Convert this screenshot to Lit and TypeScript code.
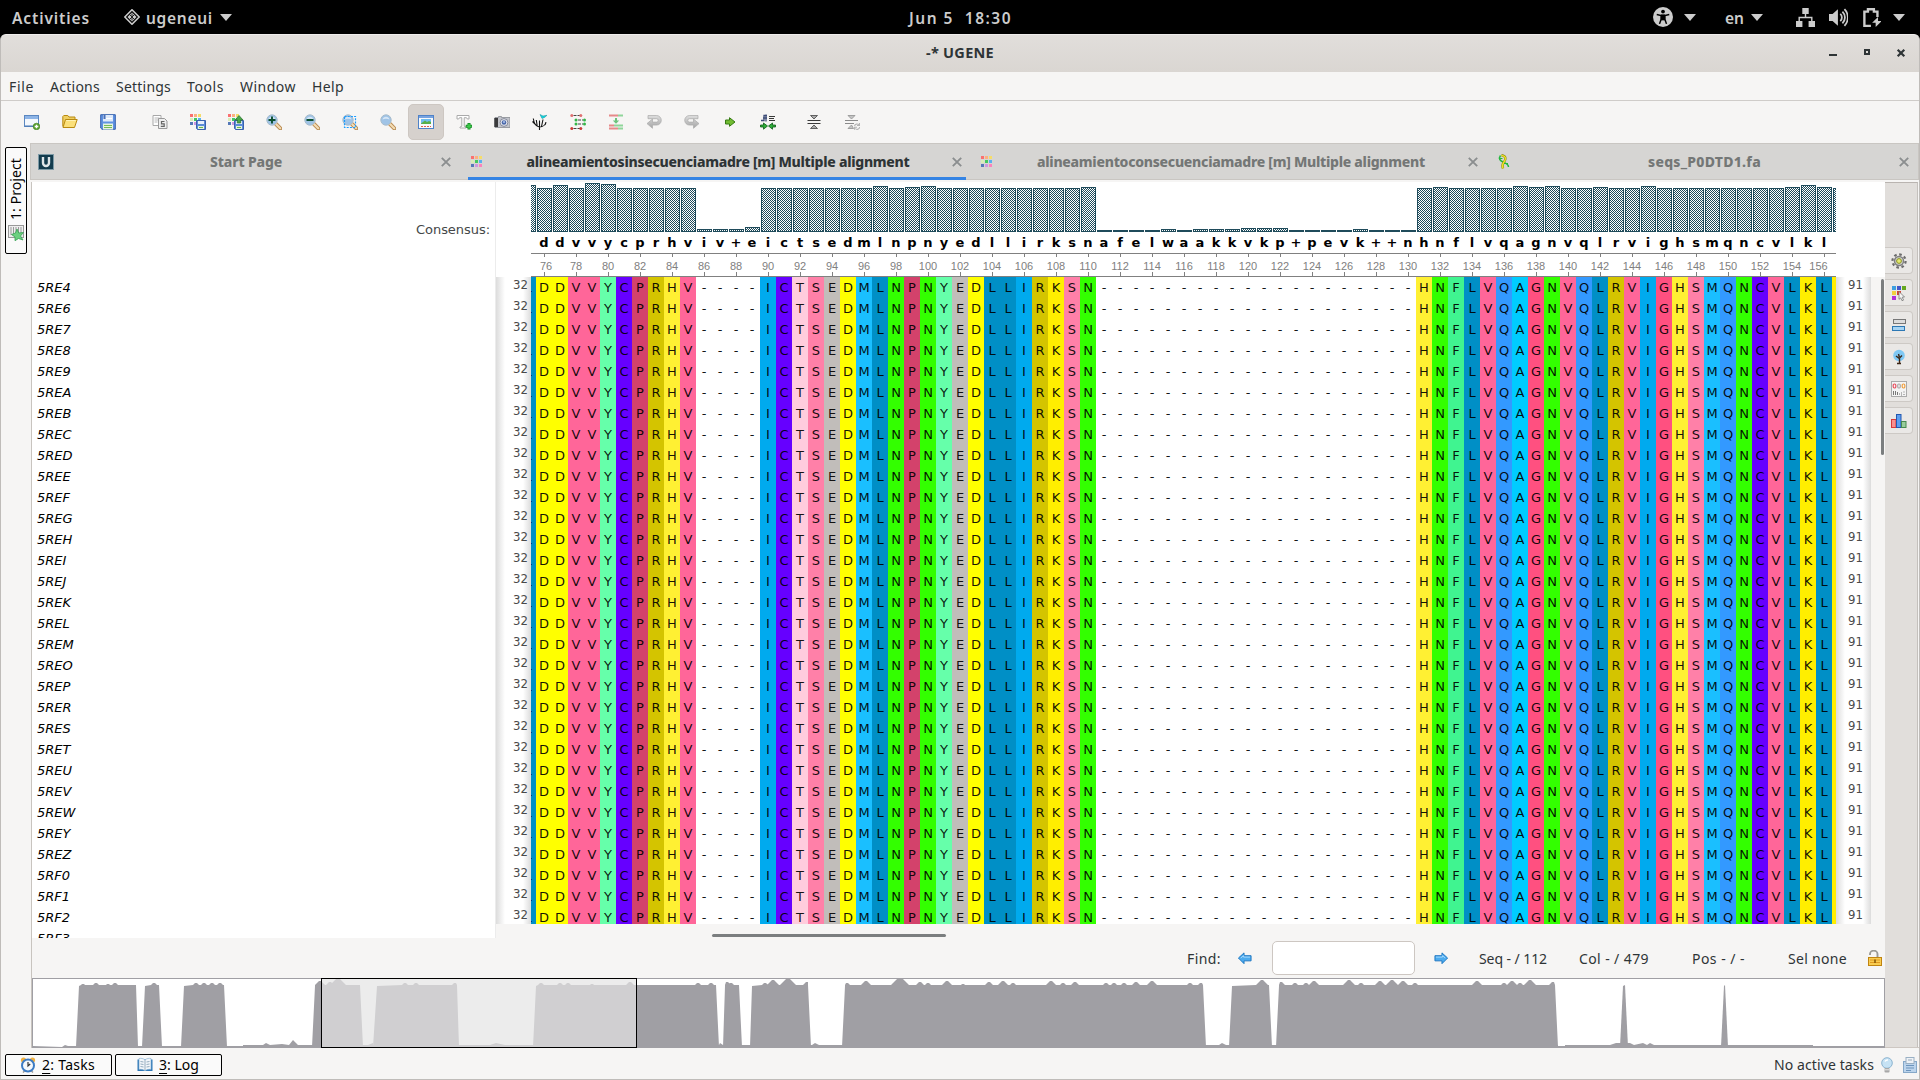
import { LitElement, html, css, svg, unsafeCSS, nothing } from "lit";
import { customElement, property } from "lit/decorators.js";
import { classMap } from "lit/directives/class-map.js";

const COLORS: Record<string, string> = {
  D: "#ffff00", V: "#ff6699", Y: "#66ffaa", C: "#6600ff", P: "#d3426b", R: "#d4c400",
  H: "#fff033", I: "#00aaee", T: "#ffccdd", S: "#ff80a8", E: "#c1bdba", M: "#1abfff",
  L: "#008fc6", N: "#33ff00", K: "#ffee00", F: "#40f490", Q: "#3399ff", A: "#00ccff", G: "#ff5080",
};
const SEQ = "LDDVVYCPRHV----ICTSEDMLNPNYEDLLIRKSN--------------------HNFLVQAGNVQLRVIGHSMQNCVLKLK";
const CONS = " ddvvycprhviv+eictsedmlnpnyedllirksnafelwaakkvkp+pevk++nhnflvqagnvqlrvighsmqncvlkl ";
const BARS = [
  47, 44, 47, 44, 49, 48, 44, 44, 44, 44, 44, 3, 3, 3, 5,
  44, 44, 44, 44, 44, 44, 44, 46, 44, 45, 46, 44, 44, 44, 44, 44, 44, 44, 44, 44, 45,
  2, 2, 2, 2, 3, 2, 3, 3, 3, 4, 4, 4, 2, 2, 2, 2, 3, 2, 2, 2,
  44, 45, 44, 44, 44, 44, 46, 45, 46, 44, 44, 45, 44, 44, 46, 44, 44, 44, 44, 44, 44, 44, 44, 45, 47, 45, 44,
];
const NAMES = ("5RE4 5RE6 5RE7 5RE8 5RE9 5REA 5REB 5REC 5RED 5REE 5REF 5REG 5REH 5REI 5REJ 5REK " +
  "5REL 5REM 5REO 5REP 5RER 5RES 5RET 5REU 5REV 5REW 5REY 5REZ 5RF0 5RF1 5RF2").split(" ");

/* Overview profile: solid blocks given as [footLeft, topLeft, topRight, footRight, bump positions (x:y)...] */
type Block = [number, number, number, number, string];
const BLOCKS: Block[] = [
  [76, 79, 136, 138, "83:984 96:983 108:984 115:983"],
  [142, 145, 159, 162, "154:983"],
  [181, 184, 224, 227, "196:983 204:983 212:983 220:983"],
  [312, 315, 360, 363, "320:981 330:982 338:978"],
  [373, 377, 457, 459, "405:983 416:983 455:983"],
  [533, 536, 716, 719, "541:983 560:983 568:983 592:984 630:982 698:983 711:983"],
  [723, 725, 739, 742, "727:982 731:983"],
  [750, 752, 808, 811, "765:983 773:980 788:978 807:982"],
  [842, 845, 1203, 1206, "847:983 866:981 900:977 920:982 928:983 947:981 963:984 989:982 1003:981 1013:983 1051:981 1063:983 1075:982 1106:983 1114:983 1124:983 1136:982 1152:981 1190:983 1201:983"],
  [1229, 1232, 1269, 1272, "1262:980"],
  [1276, 1279, 1555, 1558, "1281:982 1295:983 1306:983 1314:981 1349:980 1361:983 1380:981 1392:980 1403:981 1415:983 1477:981 1504:983 1512:981 1520:983 1530:980 1553:982"],
  [1620, 1623, 1625, 1628, ""],
  [1721, 1724, 1725, 1728, ""],
];
const LOW = "M62,1047 L65,1045 L68,1046 H243 V1045 H263 L266,1043 L270,1045 L282,1044 L289,1045 L293,1040 L298,1045 H368 L373,1043 V1045 H490 L496,1043 L505,1045 H719 L720,1043 L723,1045 H812 L815,1043 L819,1045 H1219 L1222,1043 L1226,1045 H1558 V1046 H1565 V1045 H1610 L1616,1043 H1630 L1634,1045 L1643,1043 L1647,1045 L1650,1043 L1654,1045 H1813 V1046 H1884 V1048 H33 V1046Z";

function blockPath([a, b, c, d, bumps]: Block): string {
  let p = `M${a},1047 L${b},986`;
  if (bumps) for (const s of bumps.split(" ")) {
    const [x, y] = s.split(":").map(Number);
    const w = 985 - y;
    p += ` L${Math.max(b, x - w - 1)},985 L${x - 1},${y} L${x + 1},${y} L${Math.min(c, x + w + 1)},985`;
  }
  return p + ` L${c},985 L${d},1047Z`;
}

const dots = (x = 1, y = 1, s = 3, g = 1, n = 9) =>
  ["#fa7070", "#fdb080", "#f5dd6a", "#d8ecb8", "#44c860", "#58b0ee", "#5578b8", "#cc98e0", "#fc82bc"]
    .slice(0, n).map((c, i) => svg`<rect x=${x + (i % 3) * (s + g)} y=${y + Math.floor(i / 3) * (s + g)} width=${s} height=${s} fill=${c} />`);
const floppy = svg`<path d="M6.5 6.5h9v9h-8l-1-1z" fill="#5c8cd8" stroke="#3a62ac"/><rect x="8" y="7" width="6" height="3" fill="#e8f0fc"/><rect x="8" y="12" width="6" height="3" fill="#e6f4e0"/><rect x="9" y="13" width="4" height="1" fill="#6cb850"/>`;
const lens = svg`<path d="M10 10l4.3 4.3" stroke="#b98a50" stroke-width="4" stroke-linecap="round"/><path d="M10.2 10.2l4 4" stroke="#f3dcb4" stroke-width="2.2" stroke-linecap="round"/><circle cx="6" cy="6" r="5.2" fill="#9fc3e6" stroke="#a9bccb"/><path d="M2.5 5.5a3.6 3.6 0 0 1 7 0q-3.5-1.5-7 0z" fill="#d5e6f6"/>`;
const undo = (id: string) => svg`<linearGradient id=${id} x1="0" y1="0" x2="0" y2="1"><stop offset="0" stop-color="#dedede"/><stop offset="1" stop-color="#a4a4a4"/></linearGradient><path d="M2 1.5h8.5a4.6 4.6 0 0 1 0 9.6H6.5v3.2L1 9.6 6.500 5v3.100H10.500a1.700 1.700 0 0 0 0-3.400H2z" fill="url(#${id})" stroke="#aaaaaa" stroke-width=".7"/>`;

const ICONS: Record<string, unknown> = {
  newdoc: svg`<rect x=".5" y="1.500" width="14" height="11" fill="#f4f8fd" stroke="#5b87c0"/><rect x="1" y="2" width="13" height="3" fill="#8db4e6"/><path d="M1 12h13" stroke="#4a78b4"/><circle cx="12.500" cy="12.500" r="3.300" fill="#5ea334" stroke="#3e7d1c" stroke-width=".6"/><path d="M12.500 10.700v3.600M10.700 12.500h3.600" stroke="#fff" stroke-width="1.300"/>`,
  open: svg`<path d="M.8 12.500V2.500l1-1h4l1.200 1.500h6v3" fill="#efcf62" stroke="#b98a10"/><path d="M1 13.500L3.500 5.500h11.700L12.500 13.500z" fill="#fbe07a" stroke="#b98a10"/><path d="M4.200 6.500h9.500" stroke="#fff3b4"/>`,
  save: svg`<path d="M.7.700h14.600v14.600H2L.7 14z" fill="#5f92e2" stroke="#3561ad"/><rect x="3" y="1" width="10" height="6.500" fill="#dfeaf9"/><rect x="3.500" y="1" width="2" height="4" fill="#4a70b8"/><path d="M6 4.500h6" stroke="#fff"/><rect x="3" y="9.500" width="10" height="6" fill="#e6f3df"/><path d="M4 11.500h8M4 13.500h8" stroke="#75bb55"/>`,
  copy: svg`<path d="M1 1.500h8v10H1z" fill="#fff" stroke="#a8a8a8"/><path d="M2.500 4h5M2.500 6h5M2.500 8h3" stroke="#b8b8b8"/><path d="M6.500 4.500h6l2.500 2.500v7.500H6.500z" fill="#eee" stroke="#999"/><path d="M12.500 7.500H9.500v2.300h2.700v2.600H8.800" fill="none" stroke="#666" stroke-width="1.200"/>`,
  dotsave: svg`${dots(0, 0, 3, 1)}${floppy}`,
  dotexport: svg`${dots(0, 0, 3, 1)}${floppy}<path d="M11 1.500l4 4.500h-2.300v3H9.300V6H7z" fill="#4aa548" stroke="#25702a" stroke-width=".7"/>`,
  zoomin: svg`${lens}<path d="M6 2.500v7M2.500 6h7" stroke="#0b4f30" stroke-width="1.900"/>`,
  zoomout: svg`${lens}<path d="M2.500 6h7" stroke="#0b4f30" stroke-width="1.900"/>`,
  zoomsel: svg`${lens}<rect x="2.500" y="2.500" width="11" height="11" fill="none" stroke="#1a9cff" stroke-width="1.200" stroke-dasharray="2 1.200"/>`,
  zoom: lens,
  overview: svg`<rect x=".5" y="1.500" width="15" height="13" fill="#f8fafc" stroke="#4f82c8"/><rect x="1" y="2" width="14" height="2" fill="#77a3e0"/><rect x="3" y="5" width="10" height="5" fill="#6fbcf0"/><path d="M3 9.500l4-3 2 1.500 2-1 2 1v2H3z" fill="#58b048"/><path d="M3 12.500h10" stroke="#e06050" stroke-dasharray="2 1"/>`,
  text: svg`<path d="M1 1.500h12v3.500h-1.700l-.8-1.300H8.200v8.600l1.800.7v1H4v-1l1.800-.7V3.700H3.500L2.700 5H1z" fill="#fff" stroke="#aaa"/><path d="M13 9v6.500M9.700 12.200h6.500" stroke="#128a22" stroke-width="3"/><path d="M13 9.700v5M10.500 12.200h5" stroke="#3ecb4a" stroke-width="1.500"/>`,
  camera: svg`<path d="M1 3.500h3.500V2.500h3v1H16v10H1z" fill="#c2c4ca" stroke="#888b92" stroke-width=".8"/><rect x=".3" y="4" width="3.700" height="9" fill="#3a3a3c"/><circle cx="10" cy="8.500" r="3.900" fill="#e4e6ec" stroke="#84889a"/><circle cx="10" cy="8.500" r="2.300" fill="#4b69aa"/><circle cx="10" cy="8" r=".9" fill="#bcd0f6"/>`,
  tree: svg`<path d="M7.500 16v-4.500M7.500 13C4 12.500 2 10 1.300 4.500M7.500 13c3.500 0 6-2.500 6.500-5M5.200 12L4.300 6M7.500 12V6.500M9.500 12.500L11 5.500M3 10L.5 7.500M12.700 11l1.300-1.500" fill="none" stroke="#111" stroke-width="1.100"/><path d="M8 .500l3 1.500 4-.7-2.500 2.200L10 4.500z" fill="#10d8e0" stroke="#158d98" stroke-width=".5"/>`,
  align: svg`<path d="M3.500 1.500h6.500M8 6h5M8 10h5M3.500 14.500h6.500" stroke="#444" stroke-dasharray="3 1"/><g fill="#e07070"><circle cx="1.800" cy="1.500" r="1.500"/><circle cx="10.800" cy="1.500" r="1.500"/></g><g fill="#35b548"><circle cx="6" cy="6" r="1.500"/><circle cx="14.500" cy="6" r="1.500"/><circle cx="6" cy="10" r="1.500"/><circle cx="14.500" cy="10" r="1.500"/></g><g fill="#cf3a38"><circle cx="1.800" cy="14.500" r="1.500"/><circle cx="10.800" cy="14.500" r="1.500"/></g>`,
  addseq: svg`<path d="M1 1.500h9M1 11.500h5M1 14.500h9" stroke="#e68a8a" stroke-width="2"/><path d="M10 1.500h5M6 11.500h9M10 14.500h5" stroke="#8fd69a" stroke-width="2"/><path d="M8 4v3" stroke="#6cc47c" stroke-width="2"/><path d="M4.800 6.500h6.400L8 9.800z" fill="#6cc47c"/>`,
  undo: undo("gu"),
  redo: svg`<g transform="matrix(-1 0 0 1 16 0)">${undo("gr")}</g>`,
  next: svg`<path d="M3.500 6h4V3.700L13 8l-5.500 4.300V10h-4z" fill="#72bb32" stroke="#357b12"/>`,
  realign: svg`<path d="M9 2.500h6M9 4.500h5M9 6.500h6" stroke="#222" stroke-width=".9"/><path d="M1 6.500h3v-5h3M3 4h4M6 .500v7" stroke="#3d4c78" fill="none" stroke-width="1.300"/><path d="M.5 11h3V9l4 3-4 3.200V13h-3zM15.500 11h-3V9l-4 3 4 3.200V13h3z" fill="#2fad3a" stroke="#0e5a18" stroke-width=".8"/>`,
  collapse: svg`<path d="M1.500 6.500h13M1.500 9.500h13" stroke="#3a3a3a"/><path d="M4.500 1.500h7L8 5zM4.500 14.500h7L8 11z" fill="#aaa" stroke="#555" stroke-width=".9"/>`,
  collapse2: svg`<path d="M1 6.500h13M1 9.500h9" stroke="#8a8a8a"/><path d="M4 1.500h7L7.500 5zM4 14.500h5.500L7.500 11z" fill="#c4c4c4" stroke="#999" stroke-width=".9"/><path d="M10.500 12a2.600 2.600 0 0 1 4.500-1M15.700 13a2.600 2.600 0 0 1-4.500 1.500M15.500 9v2.500H13M10.500 15.800v-2.500H13" fill="none" stroke="#b4b4b4" stroke-width="1.100"/>`,
  ugene: svg`<rect x=".5" y=".5" width="15" height="15" fill="#133c4e" stroke="#7d9aa6"/><path d="M5 3v6a3 3 0 0 0 6 0V3" fill="none" stroke="#dfe6e9" stroke-width="2.400"/>`,
  dots: dots(0, 2, 3, 1),
  dna: svg`<path d="M3.500 1.500C1 5 3.500 7 6 8s5.500 2 5.500 5" fill="none" stroke="#22b83c" stroke-width="1.500"/><path d="M4.500 1.300c5 .7 4.500 4 2.500 6.700-2 2.500-2 4-1 6.500" fill="none" stroke="#8a8a10" stroke-width="2.400"/><path d="M4.500 1.300c5 .7 4.500 4 2.500 6.700-2 2.500-2 4-1 6.500" fill="none" stroke="#f2e424" stroke-width="1.300"/><path d="M2.500 4.500h3M7 9.500h4" stroke="#22b83c"/>`,
  gear: svg`<circle cx="8" cy="8" r="6.600" fill="none" stroke="#6c6c6c" stroke-width="2.200" stroke-dasharray="2.600 2.580"/><circle cx="8" cy="8" r="4.500" fill="#d4d4d2" stroke="#808080" stroke-width="1.500"/><circle cx="8" cy="8" r="2.400" fill="#e4ea70" stroke="#8c9420"/>`,
  hilite: svg`<rect x="1" y="1" width="4" height="4" fill="#3ea0e0"/><rect x="6" y="1" width="4" height="4" fill="#4458c8"/><rect x="11" y="1" width="4" height="4" fill="#66a820"/><rect x="1" y="6" width="4" height="4" fill="#f0d040"/><rect x="6" y="6" width="4" height="4" fill="#d84030"/><rect x="1" y="11" width="4" height="4" fill="#b030d8"/><path d="M8 6.500l5.500 5.500-2.300.2 1.300 2.900-1.500.600-1.300-2.800L8 14.300z" fill="#f4f4f4" stroke="#777" stroke-width=".8"/>`,
  pair: svg`<rect x="2.500" y="2.500" width="12" height="4" fill="#ddd" stroke="#777"/><rect x="1.500" y="9.500" width="12" height="4" fill="#a6d4f4" stroke="#2d78b4"/>`,
  treeopt: svg`<circle cx="8" cy="6.500" r="5.800" fill="#7fc8f4"/><path d="M8.500 14.500V8.500M8.300 9.500L5 7M8.500 9l2.500-2.500M8.300 8L7.500 5M6 14.500h4" stroke="#3c2414" stroke-width="1.400" fill="none"/>`,
  stats: svg`<rect x=".5" y=".5" width="15" height="15" fill="#f4f4f4" stroke="#aaa"/><g fill="none" stroke-width="1.200"><rect x="2.200" y="3" width="2.600" height="4" rx="1.200" stroke="#e85060"/><rect x="6.700" y="3" width="2.600" height="4" rx="1.200" stroke="#aaa"/><rect x="11.200" y="3" width="2.600" height="4" rx="1.200" stroke="#f0a040"/></g><path d="M2.500 10v4M4.500 10v4M6.500 11v3M8 13h1M10 12h1M10 14h1M12.500 11h1M12.500 13.500h1" stroke="#777"/>`,
  chart: svg`<rect x=".5" y="6.500" width="4.500" height="8" fill="#f89090" stroke="#d83a3a"/><rect x="5.500" y="1.500" width="4.500" height="13" fill="#5c9ef0" stroke="#2458b0"/><rect x="10.500" y="8.500" width="4.500" height="6" fill="#98cc9c" stroke="#488850"/>`,
  project: svg`<rect x=".5" y=".5" width="15" height="12" fill="#eee" stroke="#999"/><path d="M3 2v8M5.500 2v8M8 2v8M10.500 2v8M13 2v8" stroke="#999"/><path d="M9 4l1.800 4 4.700-.5-3 3.500 2.500 4-4.500-1.500L7 15.700V12L3.500 9.500 7.500 8z" fill="#6cd080" stroke="#35a050" stroke-width=".8"/>`,
  clock: svg`<circle cx="3.500" cy="3" r="2.600" fill="#f0b040"/><circle cx="12.500" cy="3" r="2.600" fill="#f0b040"/><path d="M3 15.500l2-2M13 15.500l-2-2" stroke="#999" stroke-width="1.500"/><circle cx="8" cy="8.500" r="6" fill="#f4f8fc" stroke="#3d7cc4" stroke-width="2"/><path d="M8 5v4l2.200-2" stroke="#333" fill="none" stroke-width="1.200"/>`,
  book: svg`<path d="M.5 2.500h15v11.500H.5z" fill="#2e78b8"/><path d="M2 1.500c2-.5 4 0 6 1.200 2-1.200 4-1.700 6-1.200v11c-2-.5-4 0-6 1.200-2-1.200-4-1.700-6-1.200z" fill="#f2f6fa" stroke="#7aa8cc" stroke-width=".6"/><path d="M8 3v10M3.500 4.500l3 .500M3.500 7l3 .500M3.500 9.500l3 .500M12.500 4.500l-3 .500M12.500 7l-3 .500M12.500 9.500l-3 .500" stroke="#8aa4b8" stroke-width=".9"/>`,
  left: svg`<path d="M1.500 7.500L7.500 2v3H15v5.500H7.500v3z" fill="#4cabee" stroke="#1b74c0"/><path d="M4 7.500l3-2.500v1.500h7" stroke="#a9dafc" fill="none"/>`,
  right: svg`<path d="M14.500 7.500L8.500 2v3H1v5.500h7.500v3z" fill="#4cabee" stroke="#1b74c0"/><path d="M2 6.500h7V5l3 2.500" stroke="#a9dafc" fill="none"/>`,
  lock: svg`<path d="M3 5V4a3.600 3.200 0 0 1 7.500 0v4" fill="none" stroke="#9a9a96" stroke-width="1.900"/><rect x="1.500" y="7.500" width="13" height="8" fill="#f8cc50" stroke="#c08410"/><path d="M3 10h10M3 12.500h10" stroke="#e09820"/><path d="M8 9.500v3.500" stroke="#8a5c08" stroke-width="1.600"/>`,
  bulb: svg`<circle cx="8" cy="6" r="5.300" fill="#c6e2f4" stroke="#8cb4d0"/><path d="M6 4.500a3 3 0 0 1 3-1.500" stroke="#fff" stroke-width="1.500" fill="none"/><rect x="5.500" y="11" width="5" height="4.500" rx="1" fill="#a8a8a8"/><path d="M5.500 12.800h5" stroke="#e8e8e8"/>`,
  note: svg`<rect x="1.500" y="4.500" width="13" height="11" fill="#bcd4ec" stroke="#86a8c8"/><rect x="4" y=".5" width="8" height="6" fill="#eef2f6" stroke="#9ab0c4"/><path d="M4 8.500h8M4 11h8M4 13.500h5" stroke="#6c94bc"/><path d="M6 3h4" stroke="#9ab" />`,
  diamond: svg`<path d="M8 .8L15.200 8 8 15.200.8 8z" fill="none" stroke="#ccc" stroke-width="1.600"/><path d="M8 3.500L12.500 8 8 12.500 3.500 8z" fill="#ccc"/><path d="M6 6l4 4M10 6l-4 4M8 4.500v7" stroke="#222" stroke-width="1"/>`,
  access: svg`<circle cx="8" cy="8" r="8" fill="#ccc"/><circle cx="8" cy="3.600" r="1.500" fill="#000"/><path d="M3 6l3.500.8v3L5.200 13.500M13 6l-3.500.8v3l1.300 3.700M6.500 6.800h3v3.200h-3z" stroke="#000" stroke-width="1.200" fill="none"/><rect x="6.300" y="6" width="3.400" height="4.500" fill="#000"/>`,
  network: svg`<path d="M5.300 0h5.400v5H5.300zM0 11h5.400v5H0zM10.600 11H16v5h-5.400z" fill="#ccc"/><path d="M8 5v3M2.700 11V8h10.600v3" fill="none" stroke="#ccc" stroke-width="1.200"/>`,
  volume: svg`<path d="M0 5h3l4.500-4v14L3 11H0z" fill="#ccc"/><path d="M9.500 5a4 4 0 0 1 0 6M11.300 3a7 7 0 0 1 0 10M13 1a10 10 0 0 1 0 14" stroke="#ccc" fill="none" stroke-width="1.500"/>`,
  battery: svg`<path d="M7.500 15.200H2V3h3V1h5v2h3v4.500" fill="none" stroke="#ccc" stroke-width="2"/><path d="M13.500 7.500L8.500 12.500h3v3.500l5-5h-3z" fill="#ccc"/>`,
  close: svg`<path d="M3.800 3.800l8.400 8.400M12.200 3.800l-8.400 8.400" stroke="#8b8e8f" stroke-width="1.900"/>`,
  min: svg`<path d="M4 11h8" stroke="#2e3436" stroke-width="2"/>`,
  max: svg`<rect x="6" y="6" width="4" height="4" fill="none" stroke="#2e3436" stroke-width="2"/>`,
  quit: svg`<path d="M4.700 5.700l6.600 6.600M11.300 5.700l-6.600 6.600" stroke="#2e3436" stroke-width="2.200"/>`,
};

@customElement("ui-icon")
export class UiIcon extends LitElement {
  @property() name = "";
  @property({ type: Number }) size = 16;
  static styles = css`:host { display: block; flex: none; line-height: 0 } svg { display: block }`;
  render() {
    return html`<svg width=${this.size} height=${this.size} viewBox="0 0 16 16">${ICONS[this.name] ?? nothing}</svg>`;
  }
}

/* A one-line label whose tracking is tuned so that it occupies a given width. */
@customElement("ui-label")
export class UiLabel extends LitElement {
  @property() text = "";
  @property({ type: Number }) w = 0;
  @property({ type: Boolean }) mnemonic = false;
  static styles = css`
    :host { display: block; flex: none; white-space: pre }
    span { display: inline-block }
    u { text-underline-offset: 3px; text-decoration-thickness: 1px }
  `;
  firstUpdated() {
    const el = this.renderRoot.querySelector("span") as HTMLElement;
    const natural = el.getBoundingClientRect();
    const own = Math.max(natural.width, natural.height);
    el.style.letterSpacing = `${(this.w - own) / this.text.length}px`;
  }
  render() {
    return html`<span>${this.mnemonic ? html`<u>${this.text[0]}</u>${this.text.slice(1)}` : this.text}</span>`;
  }
}

const residueCss = unsafeCSS(Object.entries(COLORS).map(([k, v]) => `.r${k}{background:${v}}`).join(""));

@customElement("msa-view")
export class MsaView extends LitElement {
  static styles = [css`
    :host { display: grid; grid-template-columns: 464px 1fr; width: 1853px; height: 796px; background: #f6f5f4; overflow: hidden;
      font: 13px/21px "DejaVu Sans", sans-serif; color: #000 }
    .names { background: #fff; height: 756px; overflow: hidden; border-right: 1px solid #ececec }
    .cons-title { height: 95px; display: flex; align-items: flex-end; justify-content: flex-end; box-sizing: border-box;
      padding: 0 5px 36px 0; color: #444748; line-height: 22px }
    .name { height: 21px; padding-left: 5px; font-style: oblique; line-height: 22px }
    .main { display: flex; flex-direction: column; width: 1389px }
    .top { height: 95px; background: #fff; padding: 0 49px 0 35px; overflow: hidden }
    .track { width: 1305px; overflow: hidden }
    .bars { display: flex; align-items: flex-end; height: 50px; margin-left: -11px; width: 1400px }
    .bar { box-sizing: border-box; width: 15px; margin-left: 1px; flex: none; border: 1px solid #1f4b5b;
      background: repeating-conic-gradient(#1f4b5b 0 25%, #fff 0 50%) 0 0 / 2px 2px }
    .cons { display: flex; font-weight: bold; margin-left: -11px; width: 1400px; height: 21px; line-height: 22px }
    .c { width: 16px; flex: none; text-align: center }
    .ruler { display: flex; width: 1305px; height: 24px; box-sizing: border-box; border: solid #808080; border-width: 1px 0; overflow: hidden;
      font: 11px/25px "Liberation Sans", sans-serif; color: #808080 }
    .tick { flex: none; width: 32px; text-align: center; box-sizing: border-box;
      background: linear-gradient(#808080, #808080) 16px 0 / 1px 3px no-repeat, linear-gradient(#808080, #808080) 16px 100% / 1px 4px no-repeat }
    .tick:first-child { margin-left: -3px; padding-left: 4px }
    .tick.last { padding-right: 11px }
    .body { display: flex; height: 647px; overflow: hidden }
    .nums { width: 35px; box-sizing: border-box; color: #4a4a4a; font: 13px/21px "DejaVu Sans Condensed", "DejaVu Sans", sans-serif; font-stretch: condensed; flex: none;
      background: linear-gradient(90deg, #dcdcdc, #fff 9px, #fff 27px, #dcdcdc); text-align: right; padding-right: 3px }
    .nums.r { text-align: left; padding: 0 0 0 12px }
    .num { height: 21px; line-height: 15px }
    .grid { width: 1305px; overflow: hidden; flex: none; background: #fff; color: rgba(0, 0, 0, .92) }
    .row { display: flex; margin-left: -11px; width: 1400px; height: 21px; line-height: 22px }
    .vbar { width: 13px; display: flex; justify-content: flex-end }
    .vthumb { width: 3px; height: 176px; margin: 2px 0 0 0; border-radius: 2px; background: #7b7e7f }
    .hbar { height: 14px; display: flex; padding: 10px 0 0 216px; box-sizing: border-box }
    .hthumb { width: 234px; height: 3px; border-radius: 2px; background: #7b7e7f }
    .find { grid-column: 1 / 3; display: flex; align-items: center; height: 40px; color: #2e3436;
      font: 14px/20px "Noto Sans", sans-serif; padding-left: 1155px }
    .find ui-label { padding-top: 1px }
    .input { box-sizing: border-box; width: 143px; height: 34px; margin: 0 19px 0 20px; border: 1px solid #cdc7c2; border-radius: 5px; background: #fff }
    .a1 { margin-left: 16px } .a2 { margin-right: 30px }
    .g1 { margin-left: 32px } .g2 { margin-left: 43px } .g3 { margin-left: 43px } .g4 { margin-left: 20px }
  `, residueCss];
  render() {
    return html`
      <div class="names">
        <div class="cons-title"><ui-label text="Consensus:" w="74"></ui-label></div>
        ${[...NAMES, "5RF3"].map((n) => html`<div class="name">${n}</div>`)}
      </div>
      <div class="main">
        <div class="top"><div class="track">
          <div class="bars">${BARS.map((h) => html`<div class="bar" style="height:${h}px"></div>`)}</div>
          <div class="cons">${[...CONS].map((c) => html`<div class="c">${c}</div>`)}</div>
          <div class="ruler">${Array.from({ length: 41 }, (_, i) => 76 + i * 2).map((n) =>
            html`<div class=${classMap({ tick: true, last: n === 156 })}>${n}</div>`)}</div>
        </div></div>
        <div class="body">
          <div class="nums">${NAMES.map(() => html`<div class="num">32</div>`)}</div>
          <div class="grid">${NAMES.map(() => html`<div class="row">${[...SEQ].map((c) =>
            html`<div class=${c === "-" ? "c" : "c r" + c}>${c}</div>`)}</div>`)}</div>
          <div class="nums r">${NAMES.map(() => html`<div class="num">91</div>`)}</div>
          <div class="vbar"><div class="vthumb"></div></div>
        </div>
        <div class="hbar"><div class="hthumb"></div></div>
      </div>
      <div class="find">
        <ui-label text="Find:" w="34"></ui-label><ui-icon class="a1" name="left" size="15"></ui-icon>
        <div class="input"></div>
        <ui-icon class="a2" name="right" size="15"></ui-icon>
        <ui-label text="Seq - / 112" w="68"></ui-label>
        <ui-label class="g1" text="Col - / 479" w="70"></ui-label>
        <ui-label class="g2" text="Pos - / -" w="53"></ui-label>
        <ui-label class="g3" text="Sel none" w="59"></ui-label>
        <ui-icon class="g4" name="lock"></ui-icon>
      </div>`;
  }
}

const TOOLS = ["newdoc", "open", "save", "", "copy", "dotsave", "dotexport", "zoomin", "zoomout", "zoomsel", "zoom",
  "*overview", "text", "camera", "tree", "align", "addseq", "undo", "redo", "next", "realign", "-", "collapse", "collapse2"];
const MENUS: [string, number][] = [["File", 25], ["Actions", 50], ["Settings", 55], ["Tools", 37], ["Window", 56], ["Help", 32]];

@customElement("app-root")
export class AppRoot extends LitElement {
  static styles = css`
    :host { display: flex; flex-direction: column; width: 1920px; height: 1080px; overflow: hidden; background: #000;
      font: 14px/20px "Noto Sans", sans-serif; color: #2e3436 }
    .shell { display: grid; grid-template-columns: 1fr auto 1fr; align-items: center; height: 34px; color: #ccc; flex: none;
      font-size: 15.500px; font-weight: 600; padding: 0 15px 0 12px }
    .left, .right { display: flex; align-items: center }
    .right { justify-content: flex-end }
    .tri { width: 0; height: 0; border: 6px solid transparent; border-top: 7px solid #ccc; border-bottom: 0; margin-top: 1px }
    .appicon { margin: 0 6px 0 34px } .m7 { margin-left: 7px }
    .clock { margin-left: 4px; padding-top: 1px }
    .left ui-label, .right ui-label { padding-top: 1px }
    .acc { margin-right: 11px } .en { margin-left: 29px } .net { margin-left: 33px } .vol { margin: 0 14px } .bat { margin-right: 12px }
    .window { flex: 1; display: flex; flex-direction: column; border-radius: 6px 6px 0 0; background: #f6f5f4; border: 1px solid #bfbcb9; border-top-color: #efedec;
      box-sizing: border-box; overflow: hidden; min-height: 0 }
    .title { display: flex; height: 37px; flex: none; align-items: center; background: linear-gradient(#e1dedb, #dad6d2); font-weight: bold; font-size: 14.500px; box-sizing: border-box; padding-bottom: 3px }
    .title .name { margin-left: 925px; margin-right: 831px }
    .title ui-icon + ui-icon { margin-left: 18px }
    .menu { height: 26px; display: flex; align-items: center; border-bottom: 1px solid #cfccc9; flex: none; padding: 2px 0 0 8px }
    .menu ui-label { margin-right: 16px }
    .tools { height: 42px; display: flex; align-items: center; padding-left: 12px; flex: none }
    .tool { width: 38px; height: 36px; display: flex; align-items: center; justify-content: center }
    .tool.on { width: 36px; margin: 0 1px; box-sizing: border-box; background: #d6d1cd; border: 1px solid #cdc7c2; border-radius: 5px }
    .sep { width: 14px } .sep.s { width: 8px }
    .work { display: flex; flex: none; height: 905px }
    .rail { width: 29px; flex: none; box-sizing: border-box; padding: 4px 0 0 4px }
    .project { box-sizing: border-box; width: 22px; height: 107px; border: 1px solid #000; border-radius: 2px; background: #fafafa; display: flex; flex-direction: column;
      align-items: center; justify-content: space-between; padding: 10px 1px 12px 0; color: #000 }
    .project ui-label { writing-mode: vertical-rl; transform: rotate(180deg); line-height: 20px; font-size: 14px }
    .col { flex: 1; display: flex; flex-direction: column; min-width: 0 }
    .tabs { height: 37px; box-sizing: border-box; display: grid; grid-template-columns: 437px 498px 516px 1fr; background: #d6d5d3; border: 1px solid #c9c6c2; flex: none; margin-bottom: 2px }
    .tab { display: flex; align-items: center; justify-content: space-between; font-weight: 800; color: #747776; padding: 0 14px 1px 7px; margin-bottom: -1px }
    .tab.t2 { padding: 2px 1px 0 3px; color: #2e3436; border-bottom: 3px solid #3584e4 }
    .tab.t3 { padding: 0 1px 1px 15px }
    .tab.t4 { padding: 0 6px 1px 15px }
    .split { display: flex; height: 866px; box-sizing: border-box; border-left: 1px solid #c8c4bf; margin-left: 1px; border-bottom: 1px solid #cdc7c2 }
    .doc { width: 1853px }
    .ov { display: block }
    .opts { width: 32px; background: #e1dedb; border-top: 1px solid #b9b4b0; border-right: 1px solid #c4c0bc; padding-top: 64px; height: 800px }
    .opt { width: 28px; height: 27px; box-sizing: border-box; border: 1px solid #cdc9c5; border-left: 0; border-radius: 0 4px 4px 0; background: #eae8e6; margin-bottom: 5px; display: flex; align-items: center; justify-content: center }
    .status { display: flex; align-items: center; padding: 2px 1px 0 4px; flex: 1; min-height: 0; box-sizing: border-box }
    .btn { box-sizing: border-box; width: 107px; height: 22px; border: 1px solid #000; border-radius: 2px; display: flex; align-items: center; margin-right: 3px; background: #fafafa; color: #000 }
    .btn.b1 { padding-left: 14px } .btn.b2 { padding-left: 21px }
    .btn ui-icon { margin-right: 6px }
    .grow { flex: 1 } .status .bulb { margin: 0 7px 0 5px }
  `;
  render() {
    return html`
      <div class="shell">
        <div class="left">
          <ui-label text="Activities" w="78"></ui-label>
          <ui-icon class="appicon" name="diamond"></ui-icon>
          <ui-label text="ugeneui" w="67"></ui-label><div class="tri m7"></div>
        </div>
        <ui-label class="clock" text="Jun 5  18:30" w="103"></ui-label>
        <div class="right">
          <ui-icon class="acc" name="access" size="20"></ui-icon><div class="tri"></div>
          <ui-label class="en" text="en" w="20"></ui-label><div class="tri m7"></div>
          <ui-icon class="net" name="network" size="19"></ui-icon>
          <ui-icon class="vol" name="volume" size="19"></ui-icon>
          <ui-icon class="bat" name="battery" size="19"></ui-icon>
          <div class="tri"></div>
        </div>
      </div>
      <div class="window">
        <div class="title"><ui-label class="name" text="-* UGENE" w="68"></ui-label>
          <ui-icon name="min"></ui-icon><ui-icon name="max"></ui-icon><ui-icon name="quit"></ui-icon></div>
        <div class="menu">${MENUS.map(([t, w]) => html`<ui-label text=${t} w=${w}></ui-label>`)}</div>
        <div class="tools">${TOOLS.map((t) => t === "" ? html`<div class="sep"></div>` : t === "-" ? html`<div class="sep s"></div>` :
          html`<div class=${classMap({ tool: true, on: t[0] === "*" })}><ui-icon name=${t.replace("*", "")}></ui-icon></div>`)}</div>
        <div class="work">
          <div class="rail"><div class="project"><ui-label mnemonic text="1: Project" w="62"></ui-label><ui-icon name="project"></ui-icon></div></div>
          <div class="col">
            <div class="tabs">
              <div class="tab"><ui-icon name="ugene"></ui-icon><ui-label text="Start Page" w="72"></ui-label><ui-icon name="close"></ui-icon></div>
              <div class="tab t2"><ui-icon name="dots"></ui-icon><ui-label text="alineamientosinsecuenciamadre [m] Multiple alignment" w="383"></ui-label><ui-icon name="close"></ui-icon></div>
              <div class="tab t3"><ui-icon name="dots"></ui-icon><ui-label text="alineamientoconsecuenciamadre [m] Multiple alignment" w="388"></ui-label><ui-icon name="close"></ui-icon></div>
              <div class="tab t4"><ui-icon name="dna"></ui-icon><ui-label text="seqs_P0DTD1.fa" w="113"></ui-label><ui-icon name="close"></ui-icon></div>
            </div>
            <div class="split">
              <div class="doc">
                <msa-view></msa-view>
                <svg class="ov" width="1853" height="70" viewBox="32 978 1853 70">
                  <rect x="32.500" y="978.500" width="1852" height="69" fill="#fff" stroke="#a09fa4"/>
                  <g fill="#a09fa4"><path d=${LOW}/>${BLOCKS.map((b) => svg`<path d=${blockPath(b)} />`)}</g>
                  <rect x="321.500" y="978.500" width="315" height="69" fill="#e4e4e4" fill-opacity=".7"/>
                  <rect x="321.500" y="978.500" width="315" height="69" fill="none" stroke="#000"/>
                </svg>
              </div>
              <div class="opts">${["gear", "hilite", "pair", "treeopt", "stats", "chart"].map((n) => html`<div class="opt"><ui-icon name=${n}></ui-icon></div>`)}</div>
            </div>
          </div>
        </div>
        <div class="status">
          <div class="btn b1"><ui-icon name="clock"></ui-icon><ui-label mnemonic text="2: Tasks" w="53"></ui-label></div>
          <div class="btn b2"><ui-icon name="book"></ui-icon><ui-label mnemonic text="3: Log" w="40"></ui-label></div>
          <div class="grow"></div>
          <ui-label text="No active tasks" w="100"></ui-label><ui-icon class="bulb" name="bulb"></ui-icon><ui-icon name="note"></ui-icon>
        </div>
      </div>`;
  }
}
